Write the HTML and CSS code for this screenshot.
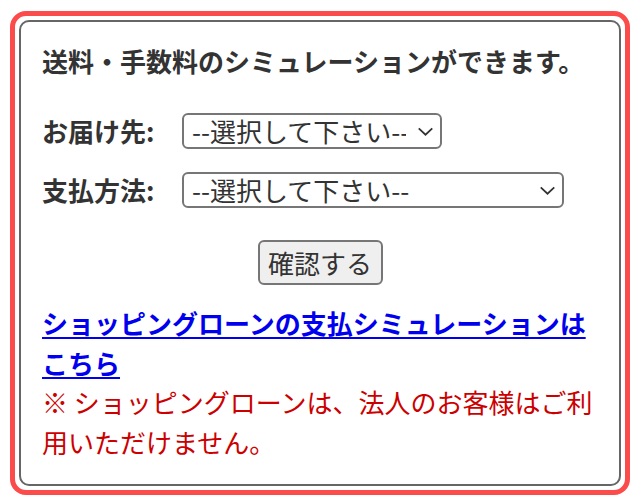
FILE: index.html
```html
<!DOCTYPE html>
<html lang="ja">
<head>
<meta charset="utf-8">
<link rel="stylesheet" href="styles.css">
</head>
<body>
<div class="outer">
  <div class="inner">
    <p class="title">送料・手数料のシミュレーションができます。</p>
    <div class="form">
      <label class="label" for="dest">お届け先:</label>
      <select id="dest" class="sel sel-short"><option>--選択して下さい--</option></select>
      <label class="label" for="pay">支払方法:</label>
      <select id="pay" class="sel sel-long"><option>--選択して下さい--</option></select>
    </div>
    <div class="actions"><button class="btn" type="button">確認する</button></div>
    <p class="link-line"><a href="#" class="link">ショッピングローンの支払シミュレーションはこちら</a></p>
    <p class="note">※ ショッピングローンは、法人のお客様はご利用いただけません。</p>
  </div>
</div>
</body>
</html>
```

FILE: styles.css
```css
html, body {
  margin: 0;
  padding: 0;
  background: #fff;
}
body {
  font-family: "Noto Sans CJK JP", "Noto Sans", sans-serif;
  font-size: 26px;
  line-height: 39.5px;
  color: #333;
}
.outer {
  margin: 11px 10px 0;
  border: 5px solid #fb4b4b;
  border-radius: 16px;
  padding: 4px;
}
.inner {
  border: 2px solid #666;
  border-radius: 10px;
  padding: 19px 21px 23px;
}
.title {
  margin: 0;
  font-weight: bold;
  color: #333;
}
.form {
  margin-top: 32.5px;
  display: grid;
  grid-template-columns: 140px auto;
  grid-auto-rows: 36px;
  row-gap: 23px;
  align-items: center;
}
.label {
  font-weight: bold;
  color: #333;
  line-height: 36px;
}
.sel {
  -webkit-appearance: none;
  appearance: none;
  justify-self: start;
  box-sizing: border-box;
  height: 36px;
  margin: 0;
  padding: 0 34px 0 8px;
  font-family: "Noto Sans CJK JP", "Noto Sans", sans-serif;
  font-size: 26px;
  line-height: 32px;
  color: #333;
  background-color: #fff;
  background-image: url("data:image/svg+xml,%3Csvg xmlns='http://www.w3.org/2000/svg' width='18' height='10' viewBox='0 0 18 10'%3E%3Cpath d='M1.5 1.5 L9 8.5 L16.5 1.5' fill='none' stroke='%23333' stroke-width='2'/%3E%3C/svg%3E");
  background-repeat: no-repeat;
  background-position: right 6px center;
  background-size: 17px 9px;
  border: 2px solid #767676;
  border-radius: 6px;
}
.sel-short { width: 260px; }
.sel-long { width: 382px; }
.actions {
  margin-top: 32px;
  text-align: center;
  line-height: 45px;
  height: 45px;
}
.btn {
  box-sizing: border-box;
  height: 45px;
  width: 125px;
  margin: 0;
  padding: 0;
  vertical-align: top;
  font-family: "Noto Sans CJK JP", "Noto Sans", sans-serif;
  font-size: 26px;
  line-height: 40px;
  color: #333;
  background: #efefef;
  border: 2px solid #767676;
  border-radius: 6px;
}
.link-line {
  margin: 18px 0 0;
}
.link {
  color: #0000ee;
  font-weight: bold;
  text-decoration: underline;
  text-decoration-thickness: 2px;
  text-underline-offset: 3px;
}
.note {
  margin: 0;
  color: #cc0000;
}
```
